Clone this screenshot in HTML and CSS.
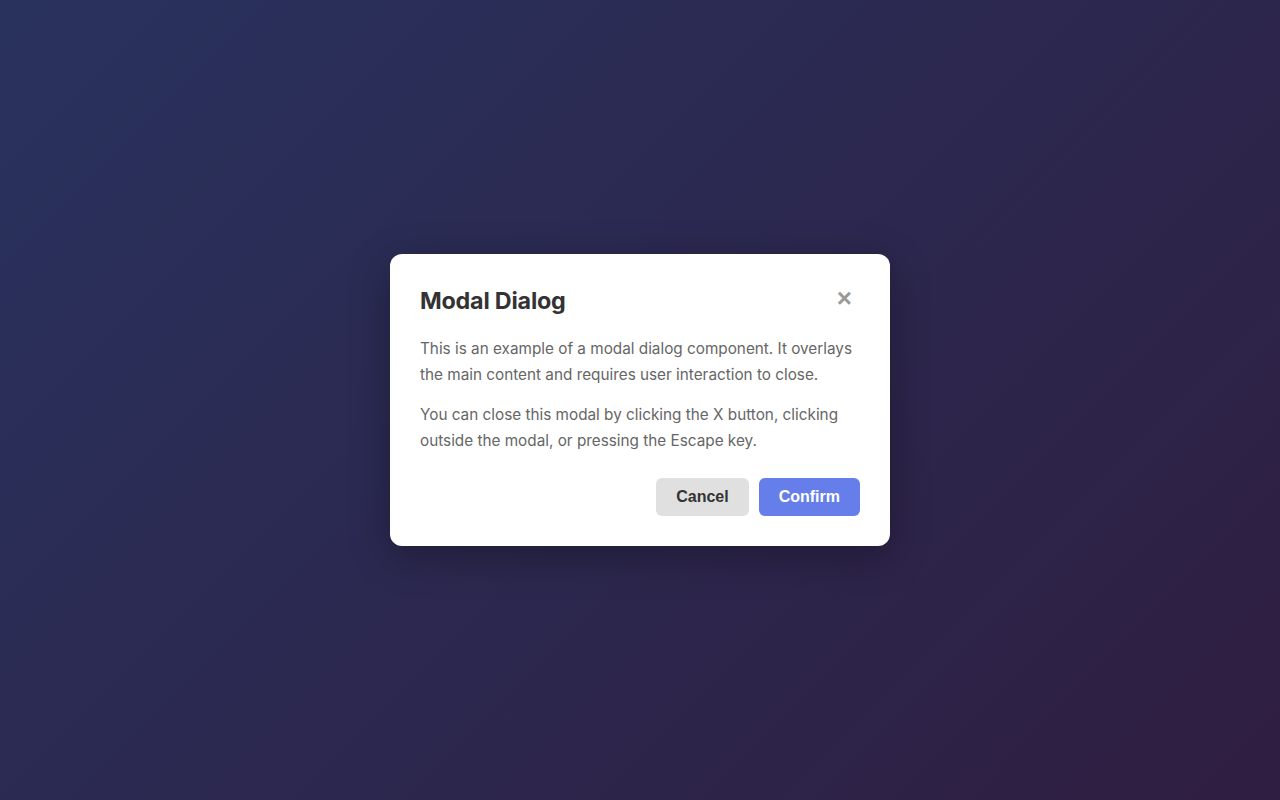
FILE: index.html
```html
<!DOCTYPE html>
<html lang="en">
<head>
<meta charset="utf-8">
<title>Modal Dialog</title>
<link rel="stylesheet" href="styles.css">
</head>
<body>
<div class="backdrop">
  <div class="overlay">
    <div class="modal" role="dialog" aria-labelledby="modal-title">
      <div class="modal-header">
        <h2 id="modal-title" class="modal-title">Modal Dialog</h2>
        <button class="close-btn" aria-label="Close">×</button>
      </div>
      <div class="modal-body">
        <p>This is an example of a modal dialog component. It overlays the main content and requires user interaction to close.</p>
        <p>You can close this modal by clicking the X button, clicking outside the modal, or pressing the Escape key.</p>
      </div>
      <div class="modal-footer">
        <button class="btn btn-cancel">Cancel</button>
        <button class="btn btn-confirm">Confirm</button>
      </div>
    </div>
  </div>
</div>
</body>
</html>
```

FILE: styles.css
```css
* { box-sizing: border-box; }
html, body { margin: 0; padding: 0; height: 100%; }
body {
  font-family: Inter, "Noto Sans", sans-serif;
}
.backdrop {
  width: 100%;
  height: 100vh;
  background: linear-gradient(135deg, #667eea 0%, #764ba2 100%);
}
.overlay {
  width: 100%;
  height: 100%;
  background: rgba(0, 0, 0, 0.6);
  display: flex;
  align-items: center;
  justify-content: center;
}
.modal {
  width: 500px;
  background: #fff;
  border-radius: 12px;
  padding: 30px;
  box-shadow: 0 10px 40px rgba(0, 0, 0, 0.3);
}
.modal-header {
  display: flex;
  align-items: center;
  justify-content: space-between;
  height: 35px;
  padding-bottom: 2px;
  margin-bottom: 17px;
}
.modal-title {
  margin: 0;
  font-size: 23.3px;
  font-weight: 700;
  line-height: 33px;
  color: #333;
  letter-spacing: -0.2px;
}
.close-btn {
  background: none;
  border: none;
  padding: 0 8px 5px 6px;
  font-family: "Liberation Sans", Arial, sans-serif;
  font-size: 26px;
  font-weight: 700;
  line-height: 1;
  color: #999;
  cursor: pointer;
}
.modal-body p {
  margin: 0 0 15px;
  font-size: 15.3px;
  line-height: 25.5px;
  color: #666;
}
.modal-footer {
  display: flex;
  justify-content: flex-end;
  gap: 10px;
  margin-top: 25px;
}
.btn {
  border: none;
  border-radius: 6px;
  padding: 10px 20px;
  font-family: "Liberation Sans", Arial, sans-serif;
  font-size: 16px;
  font-weight: 700;
  line-height: 18px;
  cursor: pointer;
}
.btn-cancel { background: #e0e0e0; color: #333; }
.btn-confirm { background: #667eea; color: #fff; }
```
